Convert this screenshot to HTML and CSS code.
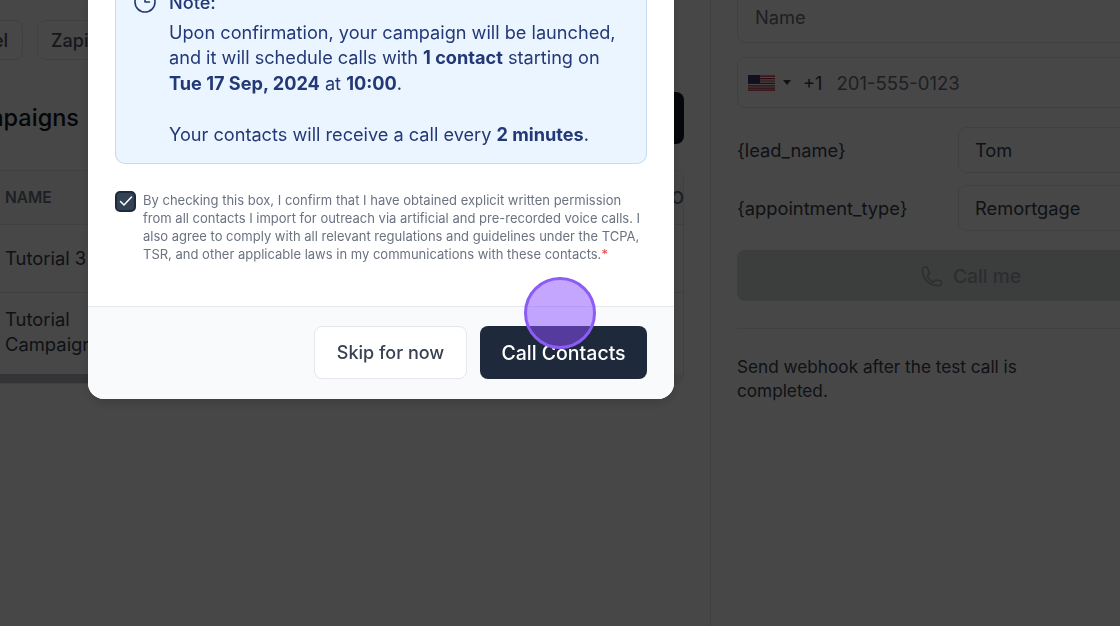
FILE: index.html
```html
<!DOCTYPE html>
<html lang="en">
<head>
    <meta charset="UTF-8">
    <title>Call Contacts</title>
    <link rel="stylesheet" href="styles.css">
</head>
<body>
    <div class="page">
        <!-- Campaigns list behind the modal -->
        <main class="main">
            <div class="chips">
                <span class="chip">Pixel</span>
                <span class="chip">Zapier</span>
            </div>
            <div class="title-row">
                <h2 class="title">Campaigns</h2>
                <span class="new-button"></span>
            </div>
            <div class="table">
                <div class="table-head">
                    <span>NAME</span>
                    <span class="head-end">O</span>
                </div>
                <div class="table-row">Tutorial 3</div>
                <div class="table-row table-row-tall">Tutorial<br>Campaign</div>
                <div class="table-scroll"><div class="table-thumb"></div></div>
            </div>
        </main>

        <!-- Test call panel -->
        <aside class="side">
            <div class="field field-name">Name</div>
            <div class="field field-phone">
                <svg class="flag" width="27" height="16" viewBox="0 0 27 16">
                    <rect width="27" height="16" fill="#fff"/>
                    <path d="M0 1.2h27M0 3.6h27M0 6h27M0 8.4h27M0 10.8h27M0 13.2h27M0 15.2h27" stroke="#b22234" stroke-width="1.2"/>
                    <rect width="12" height="8.4" fill="#3c3b6e"/>
                </svg>
                <span class="caret"></span>
                <span class="dial">+1</span>
                <span class="placeholder">201-555-0123</span>
            </div>
            <div class="var-row">
                <span class="var-name">{lead_name}</span>
                <div class="field var-input">Tom</div>
            </div>
            <div class="var-row">
                <span class="var-name">{appointment_type}</span>
                <div class="field var-input">Remortgage</div>
            </div>
            <div class="call-me">
                <svg width="24" height="24" viewBox="0 0 24 24" fill="none" stroke="currentColor" stroke-width="1.5" stroke-linecap="round" stroke-linejoin="round">
                    <path d="M2.5 6.5c0 8.3 6.7 15 15 15h2a2 2 0 0 0 2-2v-1.4c0-.5-.3-.9-.8-1l-4.4-1.100c-.4-.1-.9 0-1.200.4l-1 1.300c-.3.400-.8.500-1.200.300a12 12 0 0 1-5.500-5.500c-.2-.4-.1-.9.300-1.200l1.300-1c.4-.3.500-.8.400-1.200L7.300 3.800c-.1-.5-.5-.8-1-.8H4.500a2 2 0 0 0-2 2z"/>
                </svg>
                <span>Call me</span>
            </div>
            <p class="webhook">Send webhook after the test call is completed.</p>
        </aside>
    </div>

    <div class="overlay">
        <div class="modal">
            <div class="modal-body">
                <div class="note">
                    <svg class="note-icon" width="24" height="24" viewBox="0 0 24 24" fill="none" stroke="currentColor" stroke-width="1.6" stroke-linecap="round" stroke-linejoin="round">
                        <circle cx="12" cy="12" r="10"/>
                        <path d="M12 6v6h4.500"/>
                    </svg>
                    <div class="note-text">
                        <div class="note-title">Note:</div>
                        <p>Upon confirmation, your campaign will be launched, and it will schedule calls with <b>1 contact</b> starting on <b>Tue 17 Sep, 2024</b> at <b>10:00</b>.</p>
                        <p class="note-gap">Your contacts will receive a call every <b>2 minutes</b>.</p>
                    </div>
                </div>
                <div class="consent">
                    <span class="checkbox">
                        <svg width="16" height="16" viewBox="0 0 16 16" fill="none" stroke="#fff" stroke-width="1.500" stroke-linecap="round" stroke-linejoin="round">
                            <path d="M2.500 8.500l3.500 3.500 7.500-8"/>
                        </svg>
                    </span>
                    <p>By checking this box, I confirm that I have obtained explicit written permission from all contacts I import for outreach via artificial and pre-recorded voice calls. I also agree to comply with all relevant regulations and guidelines under the TCPA, TSR, and other applicable laws in my communications with these contacts.<span class="required">*</span></p>
                </div>
            </div>
            <div class="modal-footer">
                <button class="btn btn-light">Skip for now</button>
                <button class="btn btn-dark">Call Contacts</button>
            </div>
        </div>
    </div>

    <div class="click-marker"></div>
</body>
</html>
```

FILE: styles.css
```css
html, body {
    margin: 0;
    height: 100%;
    overflow: hidden;
}
body {
    font-family: Inter, "Liberation Sans", sans-serif;
    background: #fff;
    color: #111827;
}
p {
    margin: 0;
}

.page {
    display: flex;
    height: 626px;
}
.main {
    width: 711px;
    flex: none;
    box-sizing: border-box;
    padding: 20px 26px 0 0;
    overflow: hidden;
    border-right: 1px solid #e5e7eb;
}
.chips {
    display: flex;
    justify-content: flex-start;
    gap: 14px;
    margin-left: -60px;
}
.chip {
    box-sizing: border-box;
    height: 40px;
    width: 83px;
    padding: 0 14px;
    display: flex;
    align-items: center;
    justify-content: flex-end;
    border: 1px solid #e5e7eb;
    border-radius: 8px;
    font-size: 18px;
    font-weight: 500;
    color: #4b5563;
}
.chip + .chip {
    width: 110px;
    justify-content: flex-start;
    padding-left: 13px;
}
.title-row {
    display: flex;
    align-items: center;
    justify-content: space-between;
    height: 52px;
    margin-top: 32px;
    margin-left: -60px;
}
.title {
    margin: 0 0 1px;
    width: 139px;
    text-align: right;
    font-size: 23.500px;
    font-weight: 500;
    color: #111827;
}
.new-button {
    width: 150px;
    height: 52px;
    border-radius: 8px;
    background: #111827;
}
.table {
    margin: 26px 0 0 -60px;
    border: 1px solid #e5e7eb;
    border-radius: 8px;
}
.table-head {
    display: flex;
    align-items: center;
    justify-content: space-between;
    height: 53px;
    padding: 0 0 0 64px;
    border-bottom: 1px solid #e5e7eb;
    background: #f9fafb;
    font-size: 15.500px;
    font-weight: 600;
    color: #6b7280;
}
.head-end {
    font-size: 17px;
    margin-right: -1px;
}
.table-row {
    box-sizing: border-box;
    display: flex;
    align-items: center;
    height: 68px;
    padding: 0 0 2px 64px;
    border-bottom: 1px solid #e5e7eb;
    font-size: 18.400px;
    color: #374151;
}
.table-row-tall {
    display: block;
    height: auto;
    padding-top: 14px;
    padding-bottom: 17px;
    line-height: 25px;
    border-bottom: 0;
}
.table-scroll {
    height: 9px;
    background: #f3f4f6;
    border-radius: 0 0 8px 8px;
}
.table-thumb {
    width: 60%;
    height: 100%;
    background: #b9bcc2;
}

.side {
    flex: 1;
    min-width: 0;
    padding: 0 0 0 26px;
    overflow: hidden;
}
.field {
    box-sizing: border-box;
    display: flex;
    align-items: center;
    margin-right: -40px;
    border: 1px solid #e5e7eb;
    border-radius: 8px;
    font-size: 18.300px;
    color: #374151;
}
.field-name {
    height: 52px;
    margin-top: -9px;
    padding-left: 17px;
    color: #6b7280;
}
.field-phone {
    height: 51px;
    margin-top: 14px;
    padding-left: 10px;
}
.flag {
    flex: none;
}
.caret {
    width: 0;
    height: 0;
    margin-left: 8px;
    border-left: 4px solid transparent;
    border-right: 4px solid transparent;
    border-top: 5px solid #374151;
}
.dial {
    margin-left: 12px;
}
.placeholder {
    margin-left: 14px;
    font-size: 18.500px;
    color: #6b7280;
}
.var-row {
    display: flex;
    align-items: center;
    margin-top: 12px;
}
.field-phone + .var-row {
    margin-top: 19px;
}
.var-name {
    width: 221px;
    flex: none;
    font-size: 18.300px;
    color: #374151;
}
.var-input {
    flex: 1;
    height: 46px;
    padding-left: 16px;
}
.call-me {
    display: flex;
    align-items: center;
    justify-content: center;
    gap: 9px;
    height: 51px;
    margin: 19px -84px 0 0;
    border-radius: 8px;
    background: #d8d9db;
    color: #a0a2a8;
    font-size: 19.200px;
    font-weight: 500;
}
.webhook {
    margin-top: 27px;
    padding-top: 26px;
    border-top: 1px solid #e5e7eb;
    margin-right: -40px;
    padding-right: 90px;
    font-size: 17.200px;
    line-height: 24px;
    color: #374151;
}

.overlay {
    position: fixed;
    inset: 0;
    background: rgba(0, 0, 0, 0.72);
}
.modal {
    position: absolute;
    left: 88px;
    bottom: 227px;
    width: 586px;
    border-radius: 16px;
    overflow: hidden;
    background: #fff;
    box-shadow: 0 4px 12px rgba(0, 0, 0, 0.15);
}
.modal-body {
    padding: 20px 27px 42.500px;
}
.note {
    display: flex;
    gap: 12px;
    padding: 0 28px 3px 17px;
    border: 1px solid #c5dcee;
    border-top: 0;
    border-radius: 0 0 10px 10px;
    background: #ebf5ff;
    color: #233876;
    font-size: 18.150px;
    line-height: 25.500px;
}
.note-icon {
    flex: none;
    margin-top: -9px;
}
.note-text {
    flex: 1;
}
.note-title {
    font-weight: 500;
    margin-top: -9px;
    margin-bottom: 4px;
}
.note-gap {
    margin-top: 26px;
    margin-bottom: 12.500px;
}
.note b {
    font-weight: 700;
}
.consent {
    display: flex;
    gap: 7px;
    margin-top: 26.500px;
    font-size: 13px;
    line-height: 18.200px;
    color: #6b7280;
}
.checkbox {
    box-sizing: border-box;
    flex: none;
    display: flex;
    align-items: center;
    justify-content: center;
    width: 21px;
    height: 21px;
    border-radius: 5px;
    background: #334155;
    border: 2px solid #1e293b;
}
.required {
    color: #ef4444;
}
.modal-footer {
    display: flex;
    justify-content: flex-end;
    gap: 13px;
    padding: 19px 27px 20px;
    border-top: 1px solid #e5e7eb;
    background: #f9fafb;
}
.btn {
    box-sizing: border-box;
    height: 53px;
    border-radius: 8px;
    font-family: inherit;
    font-size: 19.500px;
    font-weight: 500;
}
.btn-light {
    width: 153px;
    border: 1px solid #e5e7eb;
    background: #fff;
    color: #374151;
    font-size: 18px;
}
.btn-dark {
    width: 167px;
    border: 0;
    background: #1e293b;
    color: #fff;
}

/* tutorial click marker, sits over the button */
.click-marker {
    position: fixed;
    left: 524px;
    top: 277px;
    box-sizing: border-box;
    width: 72px;
    height: 72px;
    border: 3px solid #8b5cf6;
    border-radius: 50%;
    background: rgba(137, 77, 255, 0.5);
}
```
